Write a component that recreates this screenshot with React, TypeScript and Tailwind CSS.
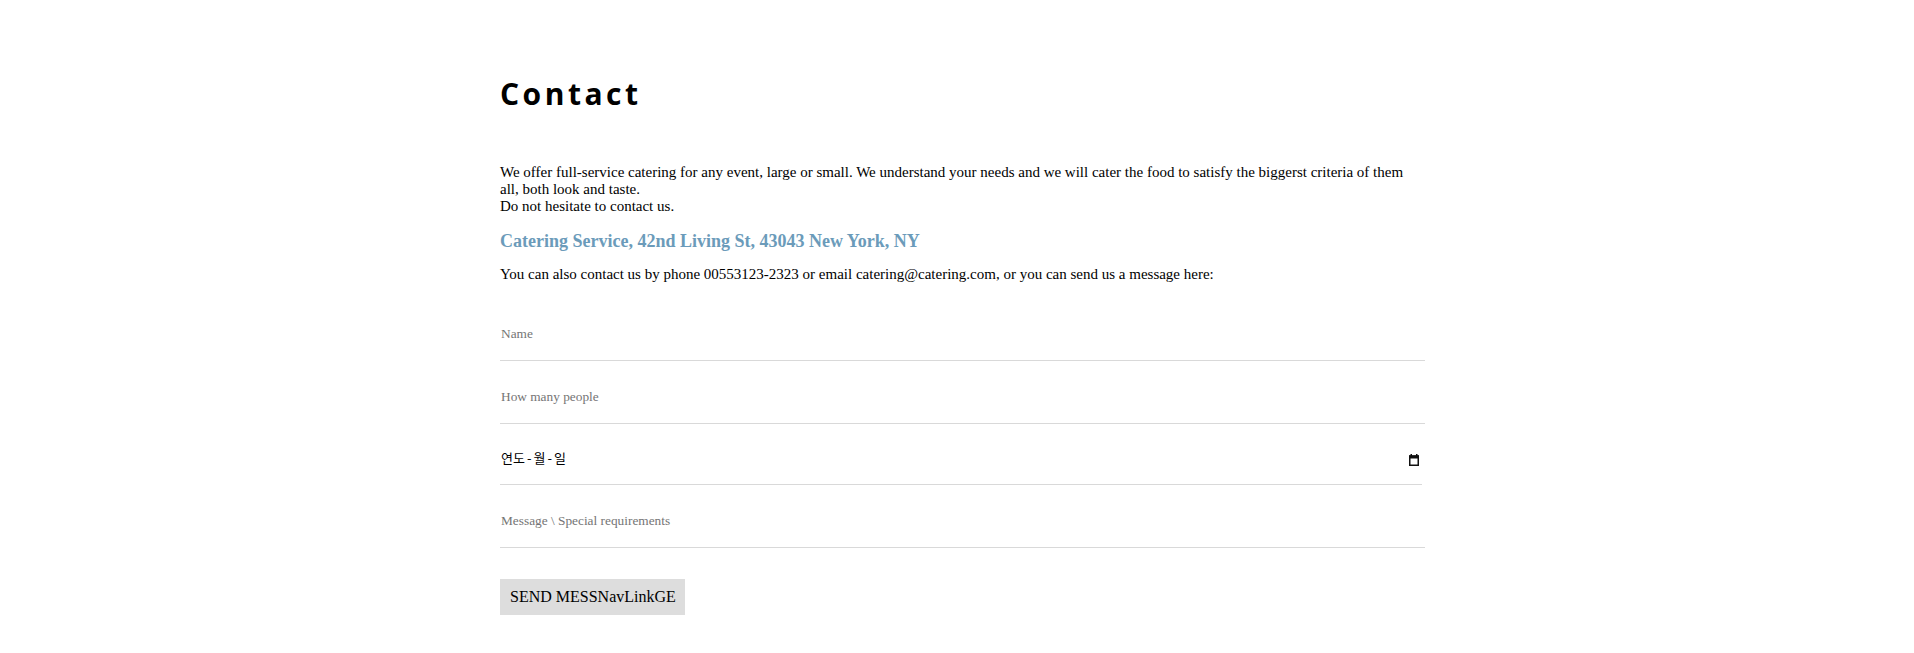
import React from "react";

function CalendarIcon() {
  return (
    <svg width="10" height="12" viewBox="0 0 10 12" aria-hidden="true">
      <rect x="1.5" y="0" width="1.5" height="2" fill="#111" />
      <rect x="7" y="0" width="1.5" height="2" fill="#111" />
      <rect x="0" y="1.5" width="10" height="3" fill="#111" />
      <rect x="0.75" y="2" width="8.5" height="9.25" fill="none" stroke="#111" strokeWidth="1.5" />
    </svg>
  );
}

export default function App() {
  const serif = { fontFamily: '"Liberation Serif", "Times New Roman", serif' };
  const kr = { fontFamily: '"Noto Sans CJK KR", "Noto Sans", sans-serif' };
  return (
    <div className="w-full min-h-[653px] bg-white" style={serif}>
      <div className="ml-[500px] w-[925px] pt-[73px]">
        <h1
          className="h-[41px] text-[30px] leading-[41px] font-bold tracking-[3.5px] text-black"
          style={{ fontFamily: '"Open Sans", "Noto Sans", sans-serif' }}
        >
          Contact
        </h1>
        <p className="mt-[50px] text-[15px] leading-[17px] text-black">
          We offer full-service catering for any event, large or small. We understand your needs and we will cater the food to satisfy the biggerst criteria of them all, both look and taste.
          <br />
          Do not hesitate to contact us.
        </p>
        <p className="mt-[16px] text-[18px] leading-[21px] font-bold text-[#6b9bba]">
          Catering Service, 42nd Living St, 43043 New York, NY
        </p>
        <p className="mt-[14px] text-[15px] leading-[17px] text-black">
          You can also contact us by phone 00553123-2323 or email catering@catering.com, or you can send us a message here:
        </p>
        <form className="flex flex-col" onSubmit={(e) => e.preventDefault()}>
          <input
            type="text"
            placeholder="Name"
            className="mt-[30px] block h-[48px] w-full border-b border-[#d9d9d9] pl-[1px] pt-[13px] pb-[18px] text-[13.33px] outline-none placeholder:text-[#757575]"
            style={serif}
          />
          <input
            type="text"
            placeholder="How many people"
            className="mt-[15px] block h-[48px] w-full border-b border-[#d9d9d9] pl-[1px] pt-[13px] pb-[18px] text-[13.33px] outline-none placeholder:text-[#757575]"
            style={serif}
          />
          <div className="mt-[15px] flex h-[46px] w-[922px] items-start justify-between border-b border-[#d9d9d9] pl-[1px] pr-[3px] pt-[10px]">
            <span className="flex text-[13px] leading-[18px] text-black" style={kr}>
              <span>연도</span>
              <span className="mx-[2px]">-</span>
              <span>월</span>
              <span className="mx-[2px]">-</span>
              <span>일</span>
            </span>
            <span className="mt-[5px]">
              <CalendarIcon />
            </span>
          </div>
          <input
            type="text"
            placeholder="Message \ Special requirements"
            className="mt-[15px] block h-[48px] w-full border-b border-[#d9d9d9] pl-[1px] pt-[13px] pb-[18px] text-[13.33px] outline-none placeholder:text-[#757575]"
            style={serif}
          />
          <div className="mt-[31px]">
            <button
              type="submit"
              className="h-[36px] bg-[#dddddd] pl-[10px] pr-[9px] text-[16px] leading-[18px] text-black"
              style={serif}
            >
              SEND MESSNavLinkGE
            </button>
          </div>
        </form>
      </div>
    </div>
  );
}
